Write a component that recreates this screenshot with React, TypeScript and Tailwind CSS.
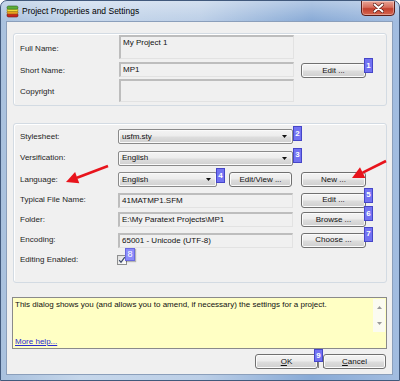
import React from "react";

const BTN =
  "relative flex h-[15px] shrink-0 items-center justify-center rounded-[3px] border border-[#707070] bg-[linear-gradient(to_bottom,#f4f4f4_0%,#ebebeb_48%,#dddddd_52%,#cfcfcf_100%)] text-[8px] leading-none text-[#111] shadow-[inset_0_0_0_1px_#fbfbfb]";

const COMBO =
  "relative flex h-[15px] shrink-0 items-center rounded-[2px] border border-[#8a8a8a] bg-[linear-gradient(to_bottom,#f4f4f4_0%,#ececec_48%,#dedede_52%,#d0d0d0_100%)] pl-[3px] text-[8px] leading-none text-[#111] shadow-[inset_0_0_0_1px_#fafafa]";

const BOX =
  "flex h-[15px] w-[175px] shrink-0 items-center border-t-2 border-l-2 border-b border-r border-t-[#bdbdbd] border-l-[#bdbdbd] border-b-[#e2e2e2] border-r-[#e2e2e2] bg-[#f0f0f0] pl-[2px] text-[8px] leading-none text-[#111]";

const LABEL = "shrink-0 text-[8px] leading-[10px] text-[#1e1e1e]";

function Badge({ n, className }: { n: string; className: string }) {
  return (
    <span
      className={
        "absolute z-10 flex h-[15px] w-[9px] items-center justify-center border border-[#4646c8] bg-[#7272f2] text-[8px] font-bold leading-none text-white " +
        className
      }
    >
      {n}
    </span>
  );
}

function Arrow() {
  return (
    <svg width="6" height="4" viewBox="0 0 6 4" className="absolute right-[4px] top-[5px]">
      <path d="M0 0 H5 L2.5 3 Z" fill="#111" />
    </svg>
  );
}

export default function App() {
  return (
    <div className="relative flex h-[381px] w-[400px] flex-col overflow-hidden rounded-t-[7px] border border-[#41597c] bg-[linear-gradient(90deg,#a9c1de_0%,#c6d7eb_20%,#bccfe7_50%,#88aad6_78%,#a3bde0_100%)] font-['Liberation_Sans',Arial,sans-serif]">
      {/* Title bar */}
      <div className="relative flex h-[20px] shrink-0 items-center pl-[5px] bg-[linear-gradient(to_bottom,rgba(255,255,255,0.35),rgba(255,255,255,0))]">
        <svg width="13" height="13" viewBox="0 0 13 13" className="mr-[3px] shrink-0">
          <rect x="1" y="8.5" width="11" height="3.5" rx="1.5" fill="#c8281e" stroke="#6e1410" strokeWidth="0.6" />
          <rect x="1" y="6" width="11" height="3" rx="1.4" fill="#f0a020" stroke="#8a5a10" strokeWidth="0.6" />
          <rect x="1" y="3.6" width="11" height="3" rx="1.4" fill="#f2dc3a" stroke="#8a7a10" strokeWidth="0.6" />
          <rect x="1" y="1" width="11" height="3.2" rx="1.5" fill="#5cae3a" stroke="#2d5e1c" strokeWidth="0.6" />
        </svg>
        <span className="text-[8.5px] leading-none text-black">Project Properties and Settings</span>
        <div className="absolute right-[4px] top-[-1px] flex h-[16px] w-[34px] items-center justify-center rounded-b-[4px] border border-[#5c1d18] bg-[linear-gradient(to_bottom,#e9a597_0%,#d66d5c_45%,#c2402e_55%,#d6664f_100%)] shadow-[inset_0_0_0_1px_rgba(255,255,255,0.35)]">
          <svg width="11" height="10" viewBox="0 0 11 10">
            <path d="M1.5 1.5 L9.5 8.5 M9.5 1.5 L1.5 8.5" stroke="#5a1a14" strokeWidth="3.4" strokeLinecap="round" />
            <path d="M1.5 1.5 L9.5 8.5 M9.5 1.5 L1.5 8.5" stroke="#ffffff" strokeWidth="2" strokeLinecap="round" />
          </svg>
        </div>
      </div>

      {/* Client */}
      <div className="mb-[5px] ml-[5px] mr-[6px] flex flex-1 flex-col border border-[#8b9fbb] bg-[#f0f0f0]">
        {/* Group 1 */}
        <div className="ml-[6px] mr-[5px] mt-[11px] flex h-[73px] flex-col rounded-[3px] border border-[#d3dbe3] pl-[6px] pt-[1px] shadow-[inset_1px_1px_0_#ffffff]">
          <div className="flex h-[24px]">
            <div className={LABEL + " w-[99px] self-center mt-[4px]"}>Full Name:</div>
            <div className={BOX.replace("items-center", "items-start") + " h-[24px] pt-[2px]"}>My Project 1</div>
          </div>
          <div className="mt-[3px] flex h-[15px] items-center">
            <div className={LABEL + " w-[99px] mt-[3px]"}>Short Name:</div>
            <div className={BOX}>MP1</div>
            <div className={BTN + " ml-[7px] mt-[2px] w-[65px]"}>
              Edit ...
              <Badge n="1" className="right-[-8px] top-[-6px]" />
            </div>
          </div>
          <div className="mt-[2px] flex h-[23px] items-center">
            <div className={LABEL + " w-[99px] mt-[3px]"}>Copyright</div>
            <div className={BOX + " h-[23px]"}></div>
          </div>
        </div>

        {/* Group 2 */}
        <div className="ml-[6px] mr-[5px] mt-[17px] flex h-[160px] flex-col rounded-[3px] border border-[#d3dbe3] pl-[6px] pt-[2px] shadow-[inset_1px_1px_0_#ffffff]">
          <div className="flex h-[21px] items-center">
            <div className={LABEL + " w-[98px]"}>Stylesheet:</div>
            <div className={COMBO + " w-[175px]"}>
              usfm.sty
              <Arrow />
              <Badge n="2" className="right-[-10px] top-[-4px]" />
            </div>
          </div>
          <div className="flex h-[22px] items-center">
            <div className={LABEL + " w-[98px]"}>Versification:</div>
            <div className={COMBO + " w-[175px]"}>
              English
              <Arrow />
              <Badge n="3" className="right-[-10px] top-[-4px]" />
            </div>
          </div>
          <div className="flex h-[21px] items-center">
            <div className={LABEL + " w-[98px]"}>Language:</div>
            <div className={COMBO + " w-[99px]"}>
              English
              <Arrow />
              <Badge n="4" className="right-[-9px] top-[-5px]" />
            </div>
            <div className={BTN + " ml-[12px] w-[63px]"}>Edit/View ...</div>
            <div className={BTN + " ml-[9px] w-[65px]"}>New ...</div>
          </div>
          <div className="flex h-[20px] items-center">
            <div className={LABEL + " w-[98px]"}>Typical File Name:</div>
            <div className={BOX}>41MATMP1.SFM</div>
            <div className={BTN + " ml-[8px] w-[65px]"}>
              Edit ...
              <Badge n="5" className="right-[-8px] top-[-6px]" />
            </div>
          </div>
          <div className="flex h-[19px] items-center">
            <div className={LABEL + " w-[98px]"}>Folder:</div>
            <div className={BOX}>E:\My Paratext Projects\MP1</div>
            <div className={BTN + " ml-[8px] w-[65px]"}>
              Browse ...
              <Badge n="6" className="right-[-8px] top-[-7px]" />
            </div>
          </div>
          <div className="flex h-[22px] items-center">
            <div className={LABEL + " w-[98px]"}>Encoding:</div>
            <div className={BOX}>65001 - Unicode (UTF-8)</div>
            <div className={BTN + " ml-[8px] w-[65px]"}>
              Choose ...
              <Badge n="7" className="right-[-8px] top-[-7px]" />
            </div>
          </div>
          <div className="flex h-[17px] items-center">
            <div className={LABEL + " w-[97px]"}>Editing Enabled:</div>
            <div className="relative h-[10px] w-[10px] border border-[#8e8f8f] bg-[linear-gradient(135deg,#dcdcdc,#ffffff)]">
              <svg width="8" height="8" viewBox="0 0 8 8" className="absolute left-0 top-0">
                <path d="M1.2 4.2 L3 6.3 L6.8 1.2" stroke="#3c4b6a" strokeWidth="1.3" fill="none" />
              </svg>
              <span className="absolute left-[7px] top-[-8px] z-10 flex h-[13px] w-[10px] items-center justify-center border border-[#6a6ae0] bg-[#8c8cfa] text-[9px] leading-none text-white shadow-[1px_1px_1px_rgba(0,0,0,0.25)]">
                8
              </span>
            </div>
          </div>
        </div>

        {/* Help area */}
        <div className="ml-[5px] mr-[5px] mt-[14px] flex h-[52px] border border-[#8a8a8a] bg-[#ffffc4]">
          <div className="flex flex-1 flex-col justify-between pb-[1px] pl-[2px] pt-[2px] text-[8px] leading-[10px]">
            <span className="text-[#111]">
              This dialog shows you (and allows you to amend, if necessary) the settings for a project.
            </span>
            <span className="text-[#2a2ad0] underline">More help...</span>
          </div>
          <div className="mr-[1px] mt-[1px] flex h-[33px] w-[12px] flex-col items-center justify-between bg-[#fbfbf1] py-[7px]">
            <svg width="5" height="3" viewBox="0 0 5 3">
              <path d="M0 3 H5 L2.5 0 Z" fill="#9a9a9a" />
            </svg>
            <svg width="5" height="3" viewBox="0 0 5 3">
              <path d="M0 0 H5 L2.5 3 Z" fill="#9a9a9a" />
            </svg>
          </div>
        </div>

        {/* Buttons */}
        <div className="mt-[5px] flex h-[15px] justify-end gap-[5px] pr-[6px]">
          <div className={BTN + " w-[63px]"}>
            <span>
              <span className="underline">O</span>K
            </span>
            <span className="absolute right-[-6px] top-[-6px] z-10 flex h-[13px] w-[9px] items-center justify-center border border-[#4646c8] bg-[#7272f2] text-[8px] font-bold leading-none text-white">
              9
            </span>
            <span className="absolute right-[-2px] top-[7px] h-[6px] w-[1px] bg-[#808080]" />
            <span className="absolute right-[-7px] top-[7px] h-[6px] w-[1px] bg-[#808080]" />
          </div>
          <div className={BTN + " w-[63px]"}>
            <span>
              <span className="underline">C</span>ancel
            </span>
          </div>
        </div>
      </div>

      {/* Red annotation arrows */}
      <svg width="400" height="381" viewBox="0 0 400 381" className="pointer-events-none absolute left-[-1px] top-[-1px] z-20">
        <line x1="108" y1="166" x2="77" y2="177.7" stroke="#e8141c" strokeWidth="2.6" />
        <polygon points="66,182 79.3,183.3 75.1,172.1" fill="#e8141c" />
        <line x1="386" y1="161" x2="362.7" y2="172.6" stroke="#e8141c" strokeWidth="2.6" />
        <polygon points="352,178 365.4,178 360,167.2" fill="#e8141c" />
      </svg>
    </div>
  );
}
